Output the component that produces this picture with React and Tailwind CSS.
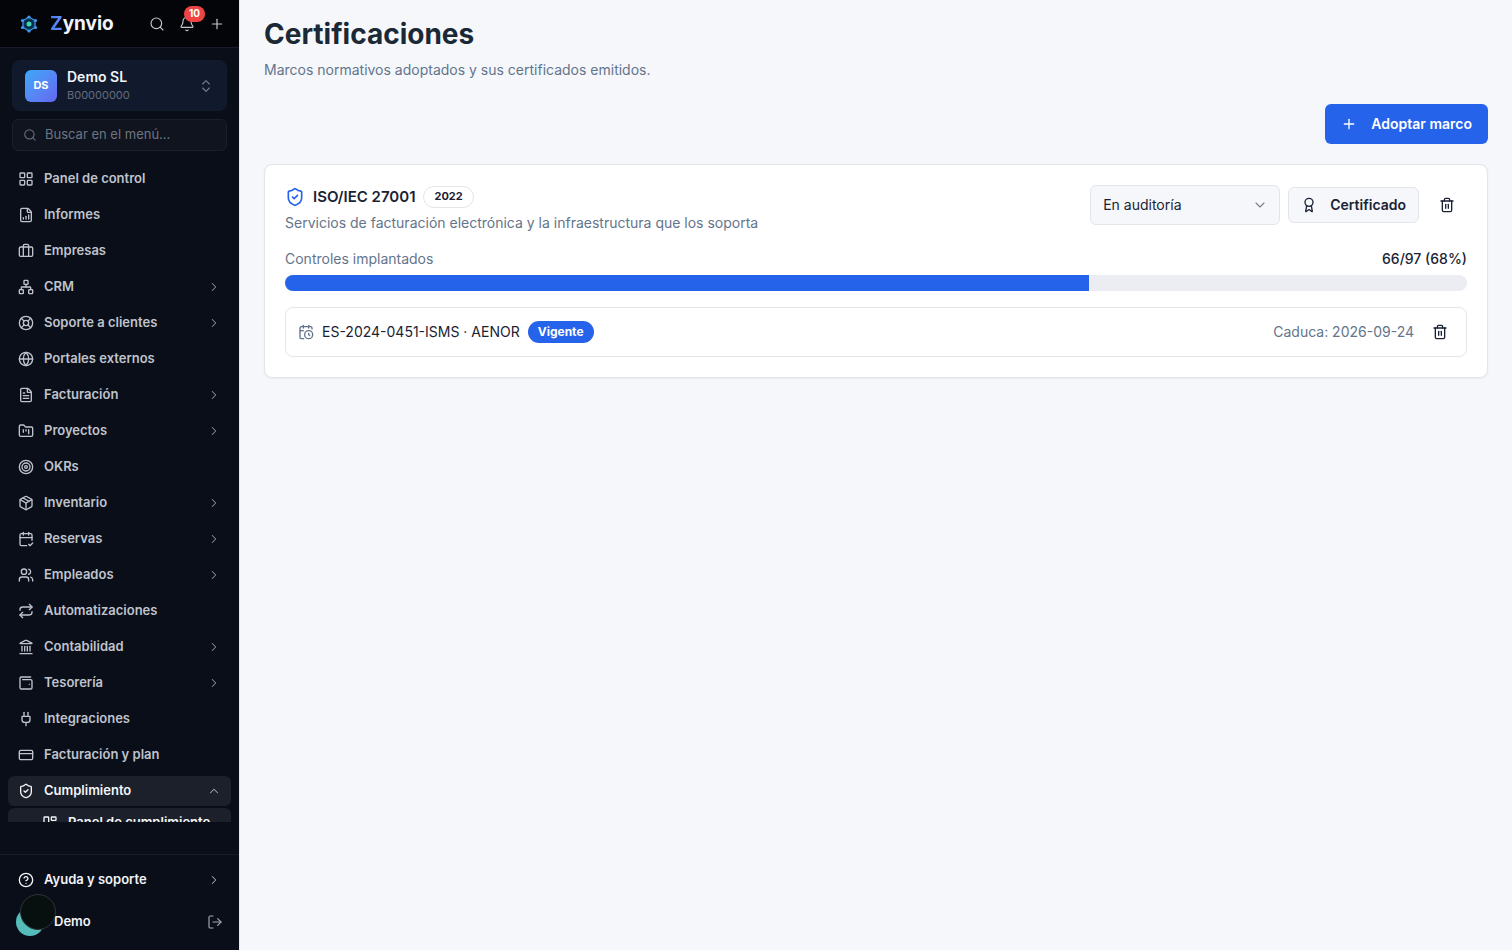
import {
  Award,
  Bell,
  Briefcase,
  CalendarCheck2,
  CalendarClock,
  ChevronDown,
  ChevronRight,
  ChevronsUpDown,
  ChevronUp,
  CircleQuestionMark,
  CreditCard,
  FileChartColumnIncreasing,
  FileText,
  FolderKanban,
  Globe,
  Landmark,
  LayoutDashboard,
  LayoutGrid,
  LifeBuoy,
  LogOut,
  Network,
  Package,
  Plug,
  Plus,
  Repeat,
  Search,
  ShieldCheck,
  Target,
  Trash2,
  Users,
  WalletMinimal,
} from "lucide-react";

const menu = [
  { label: "Panel de control", icon: LayoutGrid },
  { label: "Informes", icon: FileChartColumnIncreasing },
  { label: "Empresas", icon: Briefcase },
  { label: "CRM", icon: Network, children: true },
  { label: "Soporte a clientes", icon: LifeBuoy, children: true },
  { label: "Portales externos", icon: Globe },
  { label: "Facturación", icon: FileText, children: true },
  { label: "Proyectos", icon: FolderKanban, children: true },
  { label: "OKRs", icon: Target },
  { label: "Inventario", icon: Package, children: true },
  { label: "Reservas", icon: CalendarCheck2, children: true },
  { label: "Empleados", icon: Users, children: true },
  { label: "Automatizaciones", icon: Repeat },
  { label: "Contabilidad", icon: Landmark, children: true },
  { label: "Tesorería", icon: WalletMinimal, children: true },
  { label: "Integraciones", icon: Plug },
  { label: "Facturación y plan", icon: CreditCard },
];

const controls = { done: 66, total: 97 };

const Logo = () => (
  <svg width="18" height="18" viewBox="0 0 36 36" fill="none" aria-hidden="true">
    <path
      d="M18 4 30 11v14l-12 7-12-7V11Z"
      fill="#0c3552"
      stroke="#3b93ee"
      strokeWidth="2.5"
    />
    <circle cx="18" cy="18" r="8" fill="#0b2741" />
    <circle cx="18" cy="18" r="5" fill="#41d6b5" />
    <g fill="#3f9cf5">
      <circle cx="18" cy="4" r="3.2" />
      <circle cx="31" cy="11" r="3.2" />
      <circle cx="31" cy="25" r="3.2" />
      <circle cx="18" cy="32" r="3.2" />
      <circle cx="5" cy="25" r="3.2" />
      <circle cx="5" cy="11" r="3.2" />
    </g>
  </svg>
);

const NavItem = ({ item }) => {
  const Icon = item.icon;
  return (
    <a
      href="#"
      className="flex h-[30px] shrink-0 items-center gap-2.5 rounded-md px-2.5 text-[#bfc3cc]"
    >
      <Icon size={16} />
      <span className="flex-1">{item.label}</span>
      {item.children && (
        <ChevronRight size={14} strokeWidth={1.75} className="text-[#8b909b]" />
      )}
    </a>
  );
};

const Sidebar = () => (
  <aside className="relative flex w-60 shrink-0 flex-col border-r border-[#e5e8ee] bg-[#0a0e19]">
    <div className="flex h-12 shrink-0 items-center border-b border-[#181c28] bg-[#040509] pr-3.5 pl-5">
      <Logo />
      <span className="ml-3 flex-1 pt-0.5 text-[19px] font-bold text-[#f3f5fa]">
        <span className="bg-linear-to-r from-[#3b82f6] to-[#6b8cf8] bg-clip-text text-transparent">
          Z
        </span>
        ynvio
      </span>
      <div className="flex items-center gap-3.5 text-[#c3c6cc]">
        <button aria-label="Buscar">
          <Search size={16} strokeWidth={1.75} />
        </button>
        <button aria-label="Notificaciones" className="relative">
          <Bell size={16} strokeWidth={1.75} />
          <span className="absolute -top-2.5 left-[5px] flex h-4 w-[21px] items-center justify-center rounded-full bg-[#ef4444] text-[10px] font-bold text-white">
            10
          </span>
        </button>
        <button aria-label="Crear">
          <Plus size={16} strokeWidth={1.75} />
        </button>
      </div>
    </div>

    <div className="flex shrink-0 flex-col gap-2 px-3 pt-3">
      <button className="flex h-[51px] items-center gap-2.5 rounded-lg border border-[#131c2f] bg-[#111a2d] px-3 text-left">
        <span className="flex size-8 items-center justify-center rounded-md bg-linear-to-br from-[#38a8f8] to-[#6366f1] text-[11px] font-bold text-white">
          DS
        </span>
        <span className="flex flex-1 flex-col">
          <span className="text-sm leading-[18px] font-semibold text-[#f1f3f8]">
            Demo SL
          </span>
          <span className="text-[11px] leading-[18px] text-[#646c7d]">
            B00000000
          </span>
        </span>
        <ChevronsUpDown size={16} strokeWidth={1.75} className="text-[#747b8a]" />
      </button>
      <label className="flex h-8 items-center gap-2 rounded-md border border-[#1a1f2b] bg-[#10141f] px-2.5 text-[#6d7482]">
        <Search size={14} strokeWidth={1.75} />
        <input
          type="text"
          aria-label="Buscar en el menú"
          placeholder="Buscar en el menú..."
          className="min-w-0 flex-1 bg-transparent text-[13px] outline-none placeholder:text-[#6d7482]"
        />
      </label>
    </div>

    <nav className="mt-[13px] flex min-h-0 flex-1 flex-col gap-1.5 overflow-hidden px-2 text-[13px] font-semibold">
      {menu.map((item) => (
        <NavItem key={item.label} item={item} />
      ))}
      <div className="flex shrink-0 flex-col gap-0.5 text-[#f4f5f8]">
        <a
          href="#"
          className="flex h-[30px] items-center gap-2.5 rounded-md bg-[#1b202b] px-2.5"
        >
          <ShieldCheck size={16} />
          <span className="flex-1">Cumplimiento</span>
          <ChevronUp size={14} strokeWidth={1.75} className="text-[#a3a7b0]" />
        </a>
        <a
          href="#"
          className="flex h-[30px] items-center gap-2.5 rounded-md bg-[#1b202b] pr-2.5 pl-[34px] whitespace-nowrap"
        >
          <LayoutDashboard size={16} className="shrink-0" />
          Panel de cumplimiento
        </a>
      </div>
    </nav>

    <div className="mt-8 shrink-0 border-t border-[#161b27] px-2 pt-2.5 pb-[13px] text-[13px] font-semibold text-[#f1f3f7]">
      <a href="#" className="flex h-[30px] items-center gap-2.5 px-2.5">
        <CircleQuestionMark size={16} />
        <span className="flex-1">Ayuda y soporte</span>
        <ChevronRight size={14} strokeWidth={1.75} className="text-[#a3a7b0]" />
      </a>
      <div className="mt-3 flex h-[30px] items-center gap-2.5 px-2">
        <span className="size-7 rounded-full bg-[#55bdb9]" />
        <span className="flex-1">Demo</span>
        <button aria-label="Cerrar sesión">
          <LogOut size={16} strokeWidth={1.75} className="text-[#a3a7b0]" />
        </button>
      </div>
    </div>

    {/* Floating tools badge */}
    <button
      aria-label="Herramientas"
      className="absolute bottom-5 left-5 size-9 rounded-full border border-[#30343a] bg-[#07100f]"
    />
  </aside>
);

const CertificateRow = () => (
  <div className="mt-4 flex items-center gap-2 rounded-lg border border-[#e2e5ea] px-3 py-2.5">
    <CalendarClock size={16} className="text-[#64748b]" />
    <span>ES-2024-0451-ISMS · AENOR</span>
    <span className="flex h-[22px] items-center rounded-full bg-[#2563eb] px-2.5 text-xs font-bold text-white">
      Vigente
    </span>
    <span className="ml-auto text-[#64748b]">Caduca: 2026-09-24</span>
    <button
      aria-label="Eliminar certificado"
      className="ml-1 flex size-7 items-center justify-center"
    >
      <Trash2 size={16} />
    </button>
  </div>
);

export default function App() {
  const percent = Math.round((controls.done / controls.total) * 100);

  return (
    <div className="flex h-screen bg-[#f5f7fb] font-['Inter',sans-serif] text-[#1a2333]">
      <Sidebar />

      <main className="min-w-0 flex-1 overflow-y-auto px-6 pt-4 text-sm">
        <h1 className="text-[28px] leading-9 font-bold text-[#1b2836]">
          Certificaciones
        </h1>
        <p className="mt-2 leading-5 text-[#64748b]">
          Marcos normativos adoptados y sus certificados emitidos.
        </p>

        <div className="mt-6 flex justify-end">
          <button className="flex h-10 items-center gap-3.5 rounded-md bg-[#2563eb] px-4 font-semibold text-white">
            <Plus size={16} />
            Adoptar marco
          </button>
        </div>

        {/* Framework card */}
        <section className="mt-5 rounded-lg border border-[#e2e5ea] bg-white p-5 shadow-xs">
          <div className="flex items-start justify-between gap-4">
            <div>
              <div className="flex h-6 items-center gap-2">
                <ShieldCheck size={20} className="text-[#2563eb]" />
                <h2 className="text-[15px] font-semibold">ISO/IEC 27001</h2>
                <span className="flex h-[22px] items-center rounded-full border border-[#e2e5ea] px-2.5 text-[11px] font-bold">
                  2022
                </span>
              </div>
              <p className="mt-1 leading-5 text-[#64748b]">
                Servicios de facturación electrónica y la infraestructura que
                los soporta
              </p>
            </div>
            <div className="flex shrink-0 items-center gap-2">
              <div className="relative">
                <select
                  aria-label="Estado"
                  className="h-10 w-[190px] appearance-none rounded-md border border-[#e2e5ea] bg-[#f5f7fb] px-3"
                >
                  <option>En auditoría</option>
                </select>
                <ChevronDown
                  size={16}
                  strokeWidth={1.75}
                  className="pointer-events-none absolute top-3 right-3 text-[#7c828c]"
                />
              </div>
              <button className="flex h-9 items-center gap-[13px] rounded-md border border-[#e2e5ea] bg-[#f5f7fb] px-3 font-semibold">
                <Award size={16} />
                Certificado
              </button>
              <button
                aria-label="Eliminar marco"
                className="flex h-9 w-10 items-center justify-center"
              >
                <Trash2 size={16} />
              </button>
            </div>
          </div>

          <div className="mt-4 flex justify-between leading-5">
            <span className="text-[#64748b]">Controles implantados</span>
            <span className="font-medium">
              {controls.done}/{controls.total} ({percent}%)
            </span>
          </div>
          <div className="mt-1.5 h-4 overflow-hidden rounded-full bg-[#ebedf3]">
            <div
              className="h-full bg-[#2563eb]"
              style={{ width: `${percent}%` }}
            />
          </div>

          <CertificateRow />
        </section>
      </main>
    </div>
  );
}
